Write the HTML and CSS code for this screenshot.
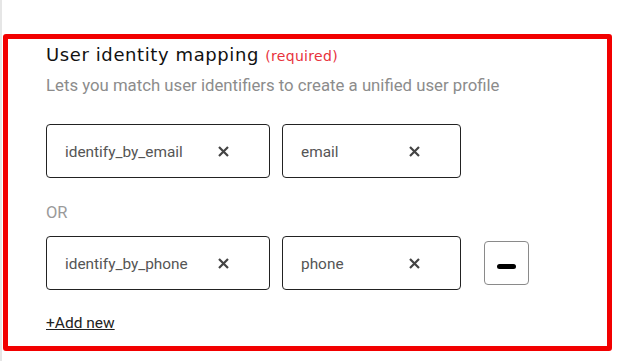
FILE: index.html
```html
<!DOCTYPE html>
<html>
<head>
    <title>User identity mapping</title>
    <link rel="stylesheet" href="styles.css">
</head>
<body>
    <div class="page">
        <div class="mapping-card">
            <h3 class="title">User identity mapping <span class="required">(required)</span></h3>
            <p class="subtitle">Lets you match user identifiers to create a unified user profile</p>

            <div class="mapping-row">
                <div class="field field-name">
                    <span class="field-text">identify_by_email</span>
                    <svg class="clear" width="11" height="11" viewBox="0 0 11 11"><path d="M1 1L10 10M10 1L1 10"/></svg>
                </div>
                <div class="field field-value">
                    <span class="field-text">email</span>
                    <svg class="clear" width="11" height="11" viewBox="0 0 11 11"><path d="M1 1L10 10M10 1L1 10"/></svg>
                </div>
            </div>

            <div class="or-label">OR</div>

            <div class="mapping-row">
                <div class="field field-name">
                    <span class="field-text">identify_by_phone</span>
                    <svg class="clear" width="11" height="11" viewBox="0 0 11 11"><path d="M1 1L10 10M10 1L1 10"/></svg>
                </div>
                <div class="field field-value">
                    <span class="field-text">phone</span>
                    <svg class="clear" width="11" height="11" viewBox="0 0 11 11"><path d="M1 1L10 10M10 1L1 10"/></svg>
                </div>
                <button class="remove-btn"><span class="minus"></span></button>
            </div>

            <a class="add-new" href="#">+Add new</a>
        </div>
    </div>
</body>
</html>
```
FILE: styles.css
```css
body { margin: 0; background: #fff; font-family: Roboto, "Liberation Sans", sans-serif; }
.page {
    height: 361px;
    box-sizing: border-box;
    padding-top: 34px;
    padding-left: 1px;
    border-left: 2px solid #e6e6e6;
}
.mapping-card {
    width: 609px;
    box-sizing: border-box;
    border: 5px solid #f20000;
    border-radius: 3px;
    padding: 4px 0 13px 38px;
}
.title {
    height: 24px;
    margin: 0;
    font-family: "DejaVu Sans", sans-serif;
    font-size: 18px;
    font-weight: 400;
    letter-spacing: 0.6px;
    line-height: 24px;
    color: #111;
}
.required {
    font-size: 14px;
    letter-spacing: 0.3px;
    line-height: 1;
    color: #e8323c;
}
.subtitle {
    margin: 8px 0 0;
    font-size: 16.75px;
    line-height: 20px;
    color: #8c8c8c;
}
.mapping-row {
    display: flex;
    align-items: center;
    margin-top: 29px;
}
.field {
    display: flex;
    align-items: center;
    height: 54px;
    box-sizing: border-box;
    border: 1px solid #222;
    border-radius: 4px;
    padding: 2px 40px 0 18px;
}
.field-name { width: 224px; }
.field-value { width: 179px; margin-left: 12px; }
.field-text {
    flex: 1;
    font-size: 15.4px;
    line-height: 18px;
    color: #555;
}
.clear { margin-top: -2px; }
.clear path { stroke: #444; stroke-width: 2.2; fill: none; }
.or-label {
    margin-top: 25px;
    font-size: 16.5px;
    line-height: 20px;
    color: #9a9a9a;
}
.or-label + .mapping-row { margin-top: 13px; }
.remove-btn {
    display: flex;
    align-items: center;
    justify-content: center;
    width: 45px;
    height: 44px;
    margin-left: 23px;
    padding: 0;
    background: #fff;
    border: 1px solid #8a8a8a;
    border-radius: 4px;
    cursor: pointer;
}
.minus {
    width: 19px;
    height: 5px;
    margin-top: 7px;
    background: #000;
    border-radius: 3px;
}
.add-new {
    display: inline-block;
    margin-top: 23px;
    font-size: 15.5px;
    line-height: 20px;
    color: #222;
    text-decoration: underline;
}
```
